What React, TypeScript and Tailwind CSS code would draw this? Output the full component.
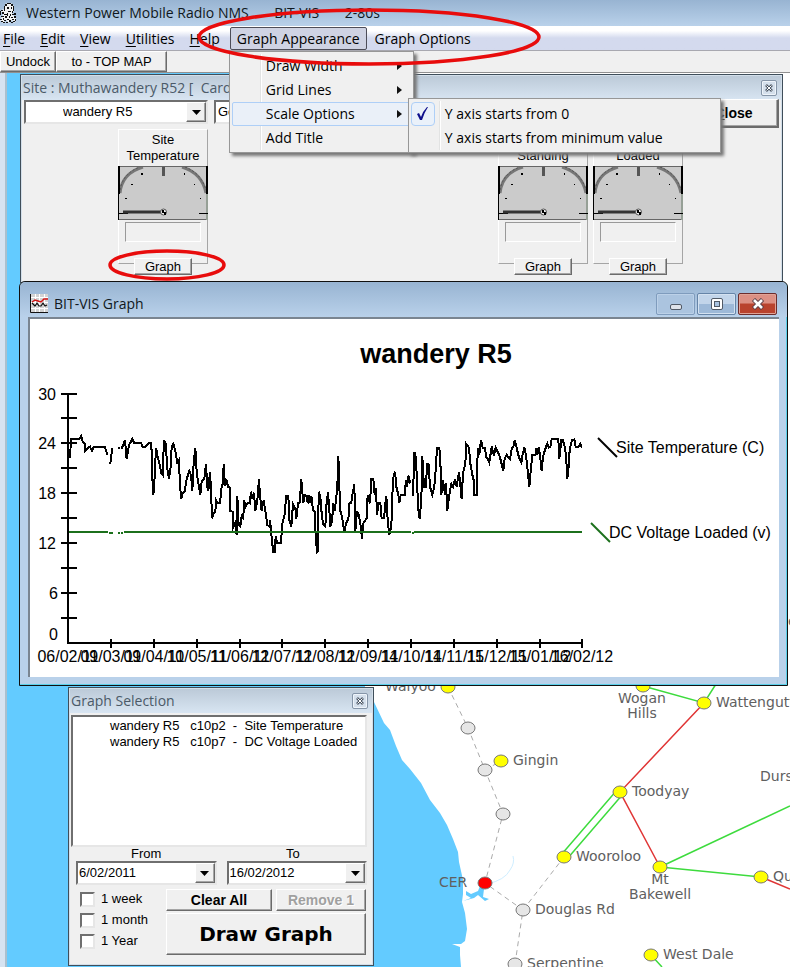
import type { ReactNode } from "react";

const raised =
  "border border-t-white border-l-white border-r-[#6b6b6b] border-b-[#6b6b6b] bg-[#f0f0f0] shadow-[inset_-1px_-1px_0_#a5a5a5]";
const sunken =
  "border-2 border-t-[#6f6f6f] border-l-[#6f6f6f] border-r-[#e6e6e6] border-b-[#e6e6e6] bg-white";

const TEMPERATURE =
  "M150,235 153,178 178,177 184,168 188,185 194,192 196,213 205,203 210,200 216,213 221,201 255,201 262,225 M270,253 273,240 276,203 M295,204 300,204 M303,205 306,204 315,180 320,238 322,225 327,195 337,177 343,189 363,189 368,201 375,201 385,190 394,189 397,295 400,345 404,290 408,203 412,225 418,250 424,280 428,285 432,180 438,192 441,262 447,297 452,262 455,200 460,192 466,213 472,248 477,240 480,320 484,357 488,340 494,333 500,297 508,273 513,285 517,333 521,250 526,203 530,275 535,310 541,345 545,305 553,297 558,252 562,320 565,333 570,275 573,330 576,415 580,400 586,395 588,360 593,368 600,368 605,320 609,310 611,252 615,318 619,297 624,320 629,323 631,393 638,395 640,440 645,430 650,465 652,348 656,435 661,440 665,408 670,415 672,360 677,380 684,368 689,370 693,335 697,355 702,338 706,393 712,360 717,298 720,345 725,393 731,360 736,393 742,435 748,440 750,420 754,460 756,485 760,515 765,515 767,468 771,488 783,488 787,432 795,400 798,347 805,348 808,420 814,440 819,372 826,385 829,417 834,370 839,368 844,298 850,370 855,345 860,347 863,370 868,347 872,370 874,347 879,390 885,395 887,470 891,515 894,512 896,335 901,350 905,400 909,432 916,440 920,365 924,337 928,390 931,440 936,425 940,370 944,393 949,350 952,320 955,227 958,320 961,393 966,410 973,455 978,430 985,418 988,370 994,368 998,340 1003,312 1006,455 1011,393 1016,405 1021,430 1026,477 1030,430 1040,415 1043,345 1050,370 1054,297 1060,297 1064,345 1068,325 1071,405 1076,370 1081,370 1085,415 1092,415 1096,370 1099,347 1103,420 1108,465 1114,440 1116,380 1119,297 1125,275 1129,320 1135,345 1138,368 1142,345 1154,345 1158,300 1161,322 1165,287 1171,310 M1179,348 1183,215 1188,235 1191,310 1196,400 1199,417 1204,360 1207,228 1212,320 1217,320 1222,252 1226,253 1230,320 1237,345 1243,320 1247,270 1251,203 1258,203 1261,240 1264,345 1268,300 1272,320 1275,345 1278,310 1282,393 1287,350 1294,312 1299,320 1305,298 1310,320 1317,275 1325,357 1329,280 1336,250 1339,192 1347,203 1351,250 1356,280 1361,300 1363,345 1371,345 1373,205 1378,225 1383,180 1388,203 1395,203 1398,230 1403,235 1408,248 1415,200 1422,228 1427,203 1433,215 1438,225 1442,240 1450,272 1454,235 1460,225 1470,237 1476,203 1480,200 1484,180 1490,203 1495,225 1500,240 1504,248 1508,222 1513,203 1518,225 1523,270 1528,320 1532,275 1537,225 1546,225 1550,203 1552,225 1556,203 1560,225 1565,273 1569,230 1574,213 1582,190 1586,203 1591,200 1595,178 1615,178 1618,237 1624,180 1628,180 1633,195 1638,225 1642,297 1646,260 1649,210 1656,180 1663,178 1667,200 1675,200 1681,192 1685,203";

const DATES = [
  "06/02/11", "09/03/11", "09/04/11", "10/05/11", "11/06/11", "12/07/11", "12/08/11",
  "12/09/11", "14/10/11", "14/11/11", "15/12/11", "15/01/12", "16/02/12",
];
const TICKS = [68, 111, 154, 197, 240, 282, 325, 368, 411, 454, 497, 540, 582];

function Chart() {
  return (
    <svg
      width="750"
      height="358"
      viewBox="30 319 750 358"
      className="block shrink-0 font-['Liberation_Sans',Arial,sans-serif]"
      role="img"
      aria-label="wandery R5 site temperature and DC voltage"
    >
      <text x="436" y="363" fontSize="27" fontWeight="bold" textAnchor="middle">wandery R5</text>
      <g stroke="#000" strokeWidth="2" shapeRendering="crispEdges">
        <path d="M68,393V644M67,643H583" fill="none" />
        {[394, 418, 443, 468, 493, 518, 543, 568, 593, 618].map((y) => (
          <path key={y} d={`M61,${y}H77`} />
        ))}
        {TICKS.slice(1).map((x) => (
          <path key={x} d={`M${x},639V648`} />
        ))}
      </g>
      <g fontSize="16">
        {[[30, 400], [24, 449], [18, 499], [12, 549], [6, 599], [0, 640]].map(([label, y]) => (
          <text key={label} x={label === 6 || label === 0 ? 58 : 56} y={y} textAnchor="end">{label}</text>
        ))}
        {DATES.map((date, i) => (
          <text key={date} x={TICKS[i]} y="662" textAnchor="middle">{date}</text>
        ))}
        <text x="616" y="453">Site Temperature (C)</text>
        <text x="609" y="538">DC Voltage Loaded (v)</text>
      </g>
      <path d={TEMPERATURE} transform="translate(20 380) scale(.33333)" fill="none" stroke="#000" strokeWidth="6" shapeRendering="crispEdges" />
      <path d="M69,532H108M109,533H113M118,533H120M121,533H123M124,532H411M412,533H414M414,532H582" stroke="#1c701c" strokeWidth="2" shapeRendering="crispEdges" />
      <path d="M598,438L617,457" stroke="#000" strokeWidth="2" />
      <path d="M591,523L610,542" stroke="#1c701c" strokeWidth="2" />
    </svg>
  );
}

type Place = { x: number; y: number; fill: string; name?: string };
const PLACES: Place[] = [
  { x: 448, y: 687, fill: "#ff0" },
  { x: 643, y: 686, fill: "#ff0" },
  { x: 468, y: 728, fill: "#e6e6e6" },
  { x: 485, y: 770, fill: "#e6e6e6" },
  { x: 501, y: 761, fill: "#ff0", name: "Gingin" },
  { x: 503, y: 814, fill: "#e6e6e6" },
  { x: 485, y: 883, fill: "#f00" },
  { x: 523, y: 910, fill: "#e6e6e6", name: "Douglas Rd" },
  { x: 515, y: 964, fill: "#e6e6e6", name: "Serpentine" },
  { x: 564, y: 857, fill: "#ff0", name: "Wooroloo" },
  { x: 620, y: 792, fill: "#ff0", name: "Toodyay" },
  { x: 704, y: 703, fill: "#ff0", name: "Wattengutten" },
  { x: 660, y: 867, fill: "#ff0" },
  { x: 761, y: 877, fill: "#ff0", name: "Quairading" },
  { x: 651, y: 955, fill: "#ff0", name: "West Dale" },
];

function RadioMap() {
  return (
    <svg width="790" height="894" viewBox="0 73 790 894" className="absolute top-0 left-0" role="img" aria-label="Radio network map">
      <path
        d="M7,73H365V687L374,702 384,723 390,730 396,746 402,760 410,769 421,783 430,800 440,813 447,825 453,839 458,852 459,862 463,880V894L462,902 465,913 467,929 465,941 461,944H452L460,947V955L461,967H7Z"
        fill="#63cbff"
      />
      <path d="M463,901L471,898 466,895 466,891 471,894 478,891 480,886 484,889 483,897 489,899 485,901 478,895 474,898 Z" fill="#63cbff" />
      <path d="M487,884Q505,880 510,870Q515,863 513,856" fill="none" stroke="#cfeeff" />
      <g fill="none" strokeWidth="1.5">
        <path d="M448,687L468,728 485,770 503,814 485,883 523,910 515,964M523,910L564,857M485,770L501,761" stroke="#aaa" strokeWidth="1" strokeDasharray="5 4" />
        <path d="M643,686L704,703 716,684M617,790L561,855M623,794L567,859M660,867L790,806M660,867L761,877M651,955L662,967" stroke="#3ddb3d" />
        <path d="M704,703L620,792 660,867M761,877L790,889" stroke="#e03535" />
      </g>
      {PLACES.map((p) => (
        <ellipse key={`${p.x}-${p.y}`} cx={p.x} cy={p.y} rx="7" ry="6" fill={p.fill} stroke="#777" />
      ))}
      <g fontSize="14" fill="#606060" className="font-['DejaVu_Sans',Verdana,sans-serif]">
        {PLACES.filter((p) => p.name).map((p) => (
          <text key={p.name} x={p.x + 12} y={p.y + 4}>{p.name}</text>
        ))}
        <text x="385" y="691">Walyoo</text>
        <text x="642" y="703" textAnchor="middle">Wogan</text>
        <text x="642" y="718" textAnchor="middle">Hills</text>
        <text x="760" y="781">Durs</text>
        <text x="439" y="887">CER</text>
        <text x="660" y="884" textAnchor="middle">Mt</text>
        <text x="660" y="899" textAnchor="middle">Bakewell</text>
        <text x="788" y="626">e</text>
      </g>
    </svg>
  );
}

function SmallClose() {
  return (
    <button aria-label="Close panel" className="mr-1 flex h-4 w-4 items-center justify-center rounded-xs border border-[#8595a8] bg-[#d5e0ec] shadow-[inset_0_0_0_1px_#eef4fa]">
      <svg width="8" height="8" viewBox="0 0 8 8">
        <path d="M1,1L7,7M7,1L1,7" stroke="#4d5866" strokeWidth="2.6" />
        <path d="M1.500,1.500L6.500,6.500M6.500,1.500L1.500,6.500" stroke="#fff" strokeWidth="1" />
      </svg>
    </button>
  );
}

function Panel({ title, className, children }: { title: string; className: string; children: ReactNode }) {
  return (
    <section className={`absolute flex flex-col border border-[#3f4e5a] bg-[#f0f0f0] p-px shadow-[inset_0_0_0_1px_#d3dfea] ${className}`}>
      <header className="flex h-6 shrink-0 items-center justify-between bg-linear-to-b from-[#bccad8] to-[#d8e5f2] pl-px font-['Open_Sans','Noto_Sans',sans-serif] text-sm text-[#4b5a68]">
        <h2 className="whitespace-pre">{title}</h2>
        <SmallClose />
      </header>
      {children}
    </section>
  );
}

function Combo({ label, value, className, indent }: { label: string; value: string; className: string; indent: string }) {
  return (
    <div className={`relative h-6 ${sunken} ${className}`}>
      <select aria-label={label} className={`block h-full w-full appearance-none bg-transparent pr-5 text-[13px] outline-none ${indent}`}>
        <option>{value}</option>
      </select>
      <span className={`pointer-events-none absolute top-0 right-0 flex h-5 w-5 items-center justify-center ${raised}`}>
        <svg width="9" height="5" viewBox="0 0 9 5"><path d="M0,0H9L4.500,5Z" /></svg>
      </span>
    </div>
  );
}

function Gauge({ lines }: { lines: string[] }) {
  return (
    <fieldset className="mt-px flex h-[135px] w-[90px] min-w-0 flex-col items-center border border-t-white border-l-white border-r-[#a5a5a5] border-b-[#a5a5a5]">
      <p className="flex h-9 shrink-0 flex-col justify-end pb-0.5 text-center text-[13px] leading-4">
        {lines.map((line) => (
          <span key={line}>{line}</span>
        ))}
      </p>
      <svg width="90" height="54" viewBox="0 0 90 54" className="-mx-px block shrink-0" aria-hidden="true">
        <rect width="90" height="54" fill="#cbcbcb" />
        <path d="M2,27Q4,7 25,1M64,1Q84,7 88,27" fill="none" stroke="#777" strokeWidth="3" />
        <path d="M2,24Q5,7 22,1M67,1Q83,7 88,24" fill="none" stroke="#555" strokeWidth="1" strokeDasharray="2 2" />
        <path d="M0,.5H90M0,53.500H90" stroke="#666" />
        <path d="M1,0V28M89,0V28" stroke="#000" strokeWidth="2" />
        <path d="M.5,28V54" stroke="#000" />
        <path d="M89,28V54" stroke="#96a096" strokeWidth="2" />
        <path d="M45.500,1V10" stroke="#555" strokeWidth="3" />
        <path d="M23,7h2v2h-2zM66,7h1v2h-1zM13,18h2v1h-2zM76,18h1v1h-1zM7,32h2v1h-2zM82,32h1v1h-1z" />
        <path d="M1,47.500H10M81,47.500H90" stroke="#000" />
        <path d="M5,46H45" stroke="#333" strokeWidth="3" />
        <circle cx="45.500" cy="46" r="3" fill="#eee" stroke="#555" />
        <path d="M44,44h2v2h2v3h-2v-2h-2z" />
      </svg>
      <output className="mt-0.5 h-5 w-[76px] shrink-0 border border-t-[#999] border-l-[#999] border-r-white border-b-white" />
      <button className={`mt-4 h-[17px] w-[58px] shrink-0 text-[13px] leading-4 ${raised}`}>Graph</button>
    </fieldset>
  );
}

function MenuRow({ label, arrow, active }: { label: string; arrow?: boolean; active?: boolean }) {
  return (
    <button
      role="menuitem"
      className={`flex h-6 w-full items-center justify-between rounded-xs border pr-2 pl-[33px] text-left ${
        active ? "border-[#aecff7] bg-[#eaf0f8]" : "border-transparent"
      }`}
    >
      {label}
      {arrow && <svg width="5" height="8" viewBox="0 0 5 8"><path d="M0,0L5,4L0,8Z" fill="#111" /></svg>}
    </button>
  );
}

function GraphMenu() {
  return (
    <div role="menu" className="absolute top-6 -left-px z-30 w-[185px] border border-[#979797] bg-[#f0f0f0] p-0.5 shadow-[3px_3px_3px_#777]">
      <div className="absolute top-0.5 bottom-0.5 left-[30px] w-0.5 border-l border-[#e2e3e3] bg-white" />
      <div className="relative">
        <MenuRow label="Draw Width" arrow />
        <MenuRow label="Grid Lines" arrow />
        <MenuRow label="Scale Options" arrow active />
        <MenuRow label="Add Title" />
      </div>
      <div role="menu" className="absolute top-[46px] left-[178px] w-[313px] border border-[#979797] bg-[#f0f0f0] p-0.5 shadow-[3px_3px_3px_#777]">
        <div className="absolute top-0.5 bottom-0.5 left-[30px] w-0.5 border-l border-[#e2e3e3] bg-white" />
        <button role="menuitemcheckbox" aria-checked="true" className="relative flex h-[25px] w-full items-center">
          <span className="flex h-6 w-6 items-center justify-center rounded-sm border border-[#aecff7] bg-[#eaf1fa]">
            <svg width="13" height="15" viewBox="0 0 13 15"><path d="M1,8L3,7L5,11Q7,5 11,1L12,1Q8,7 6,14H4Z" fill="#10108c" /></svg>
          </span>
          <span className="pl-[10px]">Y axis starts from 0</span>
        </button>
        <button role="menuitemcheckbox" aria-checked="false" className="relative flex h-6 w-full items-center pl-[34px]">
          Y axis starts from minimum value
        </button>
      </div>
    </div>
  );
}

function OctopusIcon() {
  return (
    <svg width="17" height="22" viewBox="0 0 17 22" aria-hidden="true">
      <path d="M5,2L8,1H11L14,4V9L12,12L16,16L15,21L12,18L9,21L6,18L3,21L0,18L3,13L1,9L3,7L5,9Z" fill="#f4f4f4" />
      <path
        d="M5,2h2v2H5zM7,1h4v1H7zM11,2h2v2h-2zM13,4h1v5h-1zM4,4h1v5H4zM12,9h1v2h-1zM7,5h2v2H7zM11,5h1v2h-1zM8,9h3v1H8zM1,8h2v1H1zM0,9h1v4H0zM2,10h2v2H2zM4,12h3v1H4zM7,11h1v3H7zM10,12h1v2h-1zM12,12h2v1h-2zM14,11h2v2h-2zM1,14h3v1H1zM5,14h2v2H5zM9,14h1v2H9zM11,15h2v1h-2zM14,14h2v2h-2zM0,17h2v1H0zM3,16h1v2H3zM4,18h2v1H4zM7,17h2v1H7zM9,18h2v2H9zM12,17h2v1h-2zM15,17h1v2h-1zM1,19h2v1H1zM3,20h2v1H3zM6,20h2v1H6zM11,20h2v1h-2zM13,19h2v1h-2z"
        fill="#111"
      />
    </svg>
  );
}

function GraphIcon() {
  return (
    <svg width="18" height="19" viewBox="0 0 18 19" aria-hidden="true">
      <rect width="18" height="19" fill="#d3d3d3" />
      <path d="M5.500,0V18M9.500,0V18M14.500,0V18M0,3.500H18M0,8.500H18M0,14.500H18" stroke="#fff" />
      <path d="M.5,0V18.500H18" fill="none" stroke="#111" />
      <path d="M2,8L5,6 8,7 11,8 14,5 18,5" fill="none" stroke="#d01515" strokeWidth="1.500" />
      <path d="M2,9L5,12 7,9 9,12 11,12 13,9 15,12 17,11" fill="none" stroke="#111" strokeWidth="1.200" />
    </svg>
  );
}

function WindowButtons() {
  return (
    <div className="flex gap-0.5">
      <button aria-label="Minimize" className="flex h-[22px] w-[39px] items-end justify-center rounded-xs border border-[#7f9cbd] bg-[#abc4df] pb-1 shadow-[inset_0_0_0_1px_#bcd1e8]">
        <span className="h-1.5 w-3 rounded-xs border border-[#515a66] bg-[#dfe3ea]" />
      </button>
      <button aria-label="Maximize" className="flex h-[22px] w-[39px] items-center justify-center rounded-xs border border-[#6685a8] bg-linear-to-b from-[#c2d5ea] from-50% to-[#9db9d8] to-50% shadow-[inset_0_0_0_1px_#d4e2f1]">
        <span className="flex h-3 w-3 items-center justify-center rounded-xs border border-[#515a66] bg-white">
          <span className="h-1.5 w-1.5 border border-[#515a66] bg-[#a9c3e0]" />
        </span>
      </button>
      <button aria-label="Close graph" className="flex h-[22px] w-[39px] items-center justify-center rounded-xs border border-[#6c2d2d] bg-linear-to-b from-[#dc9084] from-45% to-[#b9432e] to-50% shadow-[inset_0_0_0_1px_#e0a396]">
        <svg width="14" height="12" viewBox="0 0 14 12">
          <path d="M2.500,1.500L11.500,10.500M11.500,1.500L2.500,10.500" stroke="#5a4048" strokeWidth="4.500" />
          <path d="M3,2L11,10M11,2L3,10" stroke="#fff" strokeWidth="2.600" />
        </svg>
      </button>
    </div>
  );
}

const MENUS = ["File", "Edit", "View", "Utilities", "Help"];

export default function App() {
  return (
    <div className="relative flex min-h-screen flex-col overflow-hidden bg-white font-['Liberation_Sans',Arial,sans-serif] text-[13px] text-black">
      <header className="flex h-[26px] items-center gap-[9px] bg-linear-to-b from-[#98b4d2] to-[#b9d1ea] font-['Open_Sans','Noto_Sans',sans-serif] text-sm text-[#101820]">
        <OctopusIcon />
        <h1 className="whitespace-pre">{"Western Power Mobile Radio NMS       BIT-VIS       2-80s"}</h1>
      </header>

      <nav className="flex h-[25px] items-center gap-[15px] border-b border-[#a8a8b0] bg-linear-to-b from-white from-20% to-[#d4daee] to-50% pt-px pl-[3px] font-['Open_Sans','Noto_Sans',sans-serif] text-sm">
        {MENUS.map((name) => (
          <button key={name}>
            <span className="underline underline-offset-2">{name[0]}</span>
            {name.slice(1)}
          </button>
        ))}
        <div className="relative -ml-[5px] flex items-center gap-2">
          <button aria-haspopup="menu" aria-expanded="true" className="h-[23px] rounded-xs border border-[#4d4d58] bg-[#cfd3e3] px-1.5">
            Graph Appearance
          </button>
          <button>Graph Options</button>
          <GraphMenu />
        </div>
      </nav>

      <div className="flex h-[22px] border-b border-[#909090] bg-[#f0f0f0]">
        <button className={`w-14 ${raised}`}>Undock</button>
        <button className={`w-[111px] ${raised}`}>to - TOP MAP</button>
      </div>

      <main className="relative min-h-[894px] flex-1 overflow-hidden">
        <RadioMap />
        <div className="absolute inset-y-0 left-0 w-[7px] border-r-2 border-[#a9c0cf] bg-[#d6e3f1]" />

        <Panel title="Site : Muthawandery R52 [  Card 10 ]" className="top-px right-[7px] left-5 h-[209px]">
          <div className="flex gap-1.5 px-0.5">
            <Combo label="Site" value="wandery R5" className="w-[184px]" indent="pl-[37px]" />
            <Combo label="Mode" value="General" className="w-[184px]" indent="pl-0.5" />
            <button className={`-mt-px ml-auto h-[29px] w-[90px] border-r-2 border-b-2 text-sm font-bold ${raised}`}>
              <span className="underline">C</span>lose
            </button>
          </div>
          <div className="flex gap-[5px] pr-[98px] pl-24">
            <Gauge lines={["Site", "Temperature"]} />
            <span className="flex-1" />
            <Gauge lines={["Volts", "Standing"]} />
            <Gauge lines={["Volts", "Loaded"]} />
          </div>
        </Panel>

        <section className="absolute top-[208px] right-0.5 left-[19px] rounded-t-md border border-[#111] bg-[#b9d1ea] px-2 pb-2 shadow-[inset_-1px_-1px_0_#5bd0ea]">
          <header className="-mx-2 flex h-[35px] items-center gap-1.5 rounded-t-md bg-linear-to-b from-[#98b4d2] to-[#b9d1ea] px-2.5 pt-2 font-['Open_Sans','Noto_Sans',sans-serif] text-sm text-[#101820]">
            <GraphIcon />
            <h2 className="flex-1">BIT-VIS Graph</h2>
            <WindowButtons />
          </header>
          <div className="overflow-hidden border-t-2 border-l-2 border-t-[#7a8591] border-l-[#7a8591] bg-white">
            <Chart />
          </div>
        </section>

        <Panel title="Graph Selection" className="top-[614px] left-[68px] h-[279px] w-[306px]">
          <ul className={`mx-px mt-0.5 h-[132px] w-[296px] pt-px pl-[37px] leading-4 whitespace-pre ${sunken}`}>
            <li>{"wandery R5   c10p2  -  Site Temperature"}</li>
            <li>{"wandery R5   c10p7  -  DC Voltage Loaded"}</li>
          </ul>
          <div className="grid grid-cols-2 gap-x-2.5 pr-[5px] pl-1.5 text-center leading-[14px]">
            <span>From</span>
            <span className="-ml-2">To</span>
            <Combo label="From" value="6/02/2011" className="text-left" indent="pl-px" />
            <Combo label="To" value="16/02/2012" className="text-left" indent="pl-px" />
          </div>
          <div className="flex gap-1 pt-1 pr-1.5 pl-2.5">
            <div className="flex w-[82px] flex-col gap-[5px] pt-0.5">
              {["1 week", "1 month", "1 Year"].map((label) => (
                <label key={label} className="flex h-4 items-center gap-1.5">
                  <input type="checkbox" className={`h-[15px] w-[15px] appearance-none ${sunken}`} />
                  {label}
                </label>
              ))}
            </div>
            <div className="flex flex-1 flex-col gap-0.5">
              <div className="flex gap-1">
                <button className={`h-[22px] w-[106px] text-sm font-bold ${raised}`}>Clear All</button>
                <button disabled className={`h-[22px] flex-1 text-sm font-bold text-[#a0a0a0] [text-shadow:1px_1px_0_#fff] ${raised}`}>
                  Remove 1
                </button>
              </div>
              <button className={`h-[42px] font-['DejaVu_Sans',Verdana,sans-serif] text-xl font-bold ${raised}`}>Draw Graph</button>
            </div>
          </div>
        </Panel>

        <svg width="120" height="34" viewBox="0 0 120 34" className="pointer-events-none absolute top-[175px] left-[107px]" aria-hidden="true">
          <ellipse cx="60" cy="17" rx="57" ry="14" fill="none" stroke="#e80c0c" strokeWidth="3.500" />
        </svg>
      </main>

      <svg width="350" height="64" viewBox="0 0 350 64" className="pointer-events-none absolute top-[5px] left-[195px] z-40" aria-hidden="true">
        <ellipse cx="174" cy="32" rx="170" ry="27" fill="none" stroke="#e80c0c" strokeWidth="3.500" />
      </svg>
    </div>
  );
}
